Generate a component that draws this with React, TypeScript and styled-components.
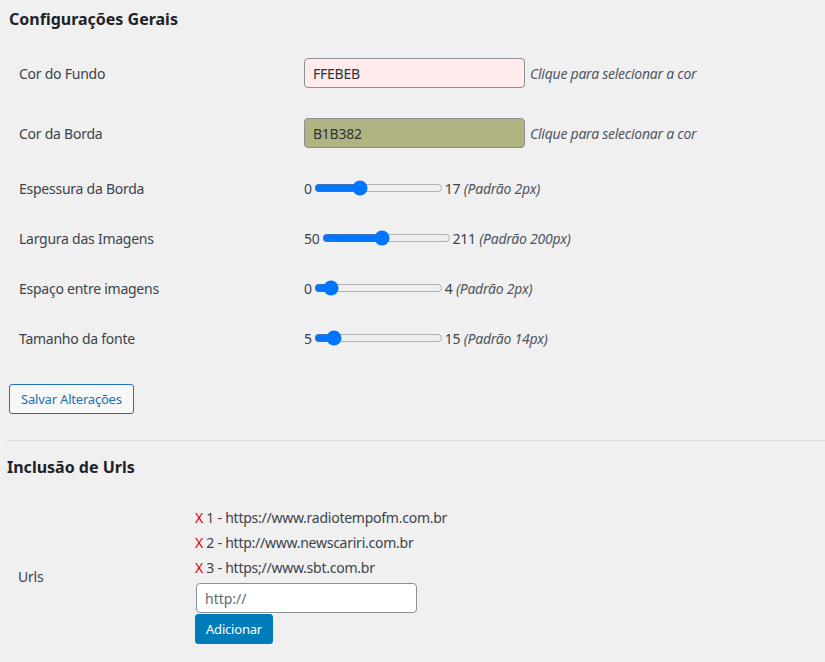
import { FC, useState } from 'react';
import styled, { createGlobalStyle } from 'styled-components';

const GlobalStyle = createGlobalStyle`
  html, body {
    margin: 0;
    padding: 0;
    background: #f0f0f1;
  }
  body {
    font-family: 'Noto Sans', 'Open Sans', sans-serif;
    color: #3c434a;
    font-size: 14px;
  }
`;

interface SliderSetting {
  label: string;
  min: number;
  max: number;
  value: number;
  hint: string;
}

const sliders: SliderSetting[] = [
  { label: 'Espessura da Borda', min: 0, max: 50, value: 17, hint: '(Padrão 2px)' },
  { label: 'Largura das Imagens', min: 50, max: 400, value: 211, hint: '(Padrão 200px)' },
  { label: 'Espaço entre imagens', min: 0, max: 50, value: 4, hint: '(Padrão 2px)' },
  { label: 'Tamanho da fonte', min: 5, max: 100, value: 15, hint: '(Padrão 14px)' },
];

const urls = ['https://www.radiotempofm.com.br', 'http://www.newscariri.com.br', 'https;//www.sbt.com.br'];

const SliderField: FC<{ setting: SliderSetting }> = ({ setting }) => {
  const [value, setValue] = useState(setting.value);
  return (
    <Control>
      {setting.min}
      <Range
        type="range"
        min={setting.min}
        max={setting.max}
        value={value}
        onChange={(e) => setValue(Number(e.target.value))}
      />
      {value} <Hint>{setting.hint}</Hint>
    </Control>
  );
};

const App: FC = () => {
  return (
    <>
      <GlobalStyle />
      <Page>
        <Title $left={9} $top={8}>
          Configurações Gerais
        </Title>
        <Form $labelWidth={304}>
          <Label $height={60}>Cor do Fundo</Label>
          <Control>
            <ColorInput defaultValue="FFEBEB" $bg="#ffebeb" />
            <Hint>Clique para selecionar a cor</Hint>
          </Control>
          <Label $height={60}>Cor da Borda</Label>
          <Control>
            <ColorInput defaultValue="B1B382" $bg="#b1b382" />
            <Hint>Clique para selecionar a cor</Hint>
          </Control>
          {sliders.map((s) => (
            <Row key={s.label}>
              <Label $height={50}>{s.label}</Label>
              <SliderField setting={s} />
            </Row>
          ))}
        </Form>
        <SaveButton>Salvar Alterações</SaveButton>
        <Divider />
        <Title $left={7} $top={15}>
          Inclusão de Urls
        </Title>
        <Form $labelWidth={195}>
          <Label $height={170} $left={18}>
            Urls
          </Label>
          <UrlCell>
            {urls.map((u, i) => (
              <UrlItem key={u}>
                <Remove>X</Remove> {i + 1} - {u}
              </UrlItem>
            ))}
            <UrlInput placeholder="http://" />
            <AddButton>Adicionar</AddButton>
          </UrlCell>
        </Form>
      </Page>
    </>
  );
};

const Page = styled.div`
  width: 825px;
  height: 662px;
  overflow: hidden;
`;

const Title = styled.h2<{ $left: number; $top: number }>`
  margin: 0;
  padding: ${(p) => p.$top}px 0 0 ${(p) => p.$left}px;
  height: 26px;
  font-size: 16px;
  line-height: 22px;
  font-weight: 700;
  color: #1d2327;
`;

const Form = styled.div<{ $labelWidth: number }>`
  display: grid;
  grid-template-columns: ${(p) => p.$labelWidth}px 1fr;
  margin-top: 9px;
  letter-spacing: -0.25px;
`;

const Row = styled.div`
  display: contents;
`;

const Label = styled.div<{ $height: number; $left?: number }>`
  display: flex;
  align-items: center;
  height: ${(p) => p.$height}px;
  padding-left: ${(p) => p.$left ?? 19}px;
  color: #3c434a;
`;

const Control = styled.div`
  display: flex;
  align-items: center;
  white-space: pre;
  color: #3c434a;
`;

const Hint = styled.span`
  font-style: italic;
  color: #50575e;
`;

const ColorInput = styled.input<{ $bg: string }>`
  box-sizing: border-box;
  width: 221px;
  height: 30px;
  margin-right: 5px;
  padding: 0 8px;
  border: 1px solid #8c8f94;
  border-radius: 4px;
  background: ${(p) => p.$bg};
  font-family: inherit;
  font-size: 14px;
  letter-spacing: -0.25px;
  color: #2c3338;
`;

const Range = styled.input`
  width: 129px;
  margin: 2px;
`;

const SaveButton = styled.button`
  display: block;
  margin: 21px 0 0 9px;
  height: 30px;
  padding: 0 11px;
  background: #f6f7f7;
  border: 1px solid #2271b1;
  border-radius: 3px;
  color: #2271b1;
  font-family: inherit;
  font-size: 13px;
  letter-spacing: -0.2px;
`;

const Divider = styled.hr`
  margin: 26px 0 0 7px;
  border: 0;
  border-top: 1px solid #dcdcde;
`;

const UrlCell = styled.div`
  display: flex;
  flex-direction: column;
  align-items: flex-start;
  padding-top: 14px;
`;

const UrlItem = styled.div`
  line-height: 25px;
  color: #3c434a;
`;

const Remove = styled.span`
  color: #e00000;
`;

const UrlInput = styled.input`
  box-sizing: border-box;
  width: 221px;
  height: 30px;
  margin: 3px 0 1px 1px;
  padding: 0 8px;
  border: 1px solid #8c8f94;
  border-radius: 4px;
  background: #fff;
  font-family: inherit;
  font-size: 14px;
  &::placeholder {
    color: #646970;
  }
`;

const AddButton = styled.button`
  height: 30px;
  padding: 0 10px;
  background: #007cba;
  border: 1px solid #007cba;
  border-radius: 3px;
  color: #fff;
  font-family: inherit;
  font-size: 13px;
  letter-spacing: -0.2px;
`;

export default App;
